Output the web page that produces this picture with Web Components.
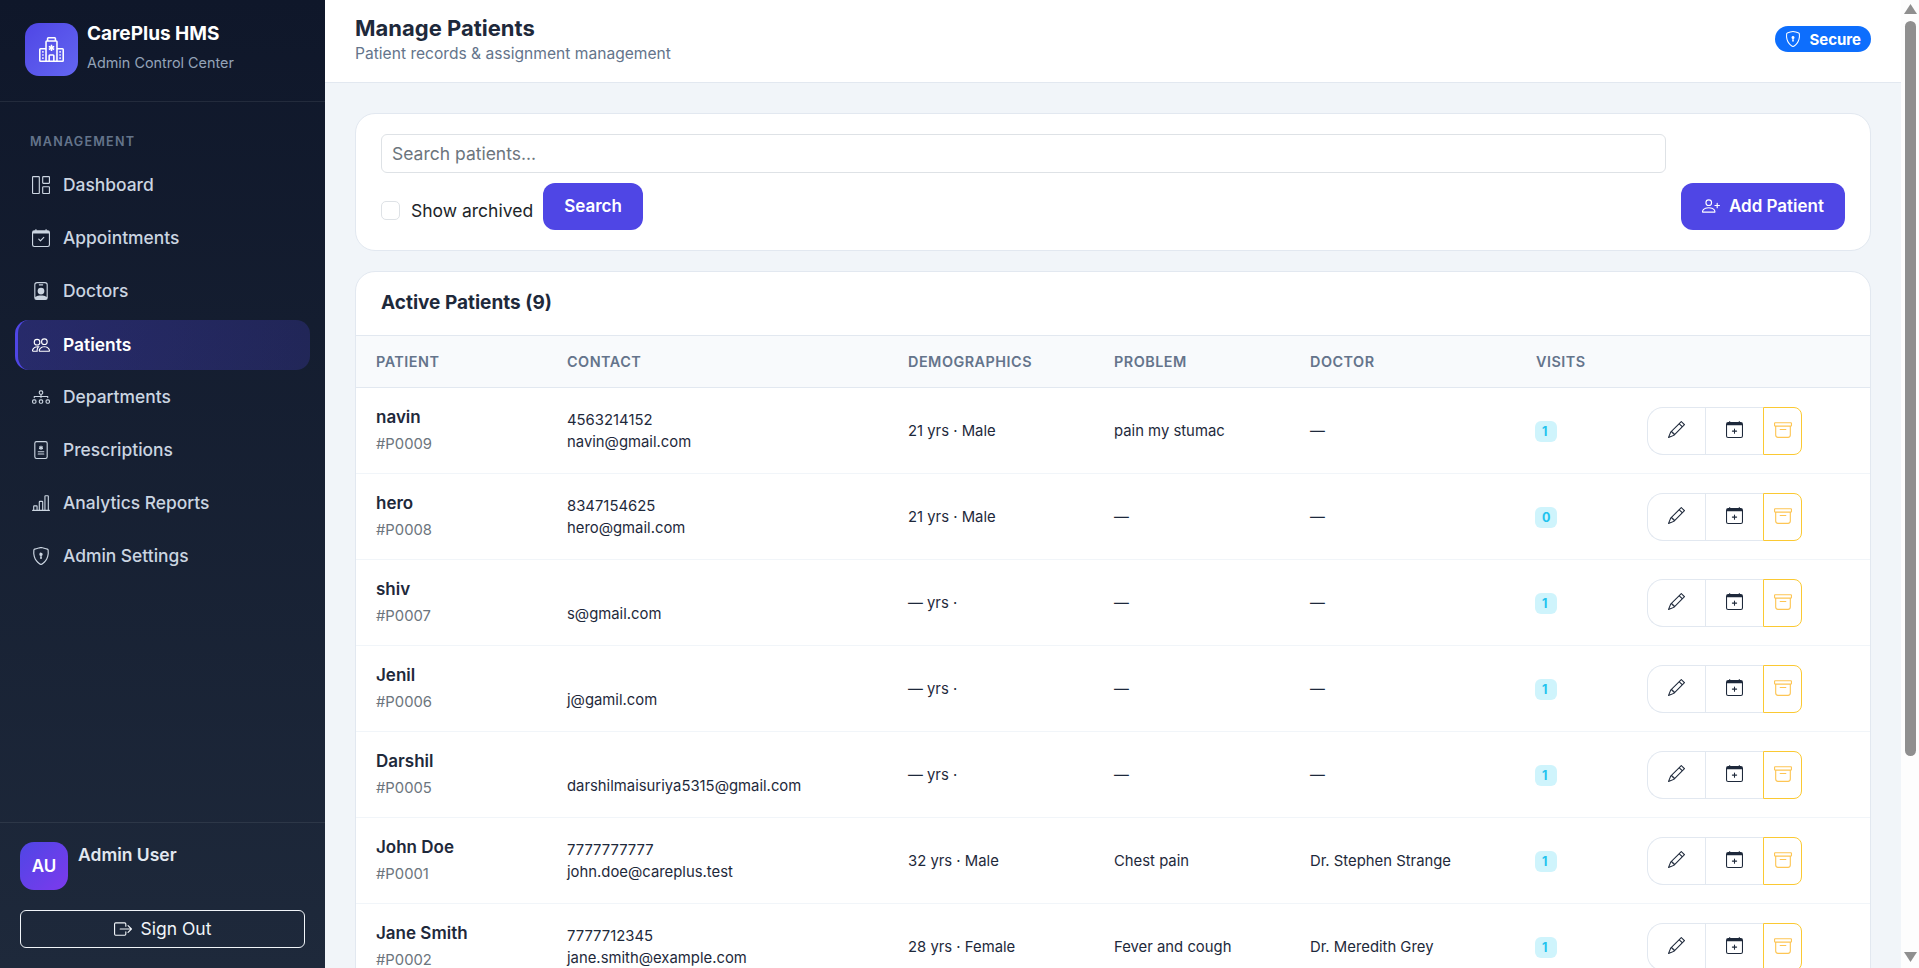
<!DOCTYPE html>
<html lang="en">
<head>
<meta charset="utf-8">
<title>Manage Patients</title>
<style>
  html { background: #f1f5f9; }
  body {
    margin: 0;
    font-family: Inter, "Noto Sans", sans-serif;
    color: #212529;
  }
</style>
</head>
<body>
<hms-app></hms-app>
<page-scrollbar></page-scrollbar>

<script>
const ICONS = {
  hospital: '<path d="M8.5 5.034v1.1l.953-.55.5.867L9 7l.953.55-.5.866-.953-.55v1.1h-1v-1.1l-.953.55-.5-.866L7 7l-.953-.55.5-.866.953.55v-1.1zM13.25 9a.25.25 0 0 0-.25.25v.5c0 .138.112.25.25.25h.5a.25.25 0 0 0 .25-.25v-.5a.25.25 0 0 0-.25-.25zM13 11.25a.25.25 0 0 1 .25-.25h.5a.25.25 0 0 1 .25.25v.5a.25.25 0 0 1-.25.25h-.5a.25.25 0 0 1-.25-.25zm.25 1.75a.25.25 0 0 0-.25.25v.5c0 .138.112.25.25.25h.5a.25.25 0 0 0 .25-.25v-.5a.25.25 0 0 0-.25-.25zm-11-4a.25.25 0 0 0-.25.25v.5c0 .138.112.25.25.25h.5A.25.25 0 0 0 3 9.75v-.5A.25.25 0 0 0 2.75 9zm0 2a.25.25 0 0 0-.25.25v.5c0 .138.112.25.25.25h.5a.25.25 0 0 0 .25-.25v-.5a.25.25 0 0 0-.25-.25zM2 13.25a.25.25 0 0 1 .25-.25h.5a.25.25 0 0 1 .25.25v.5a.25.25 0 0 1-.25.25h-.5a.25.25 0 0 1-.25-.25z"/><path d="M5 1a1 1 0 0 1 1-1h4a1 1 0 0 1 1 1v1a1 1 0 0 1 1 1v4h3a1 1 0 0 1 1 1v7a1 1 0 0 1-1 1H1a1 1 0 0 1-1-1V8a1 1 0 0 1 1-1h3V3a1 1 0 0 1 1-1zm2 14h2v-3H7zm3 0h1V3H5v12h1v-3a1 1 0 0 1 1-1h2a1 1 0 0 1 1 1zm0-14H6v1h4zm2 7v7h3V8zm-8 7V8H1v7z"/>',
  dashboard: '<path d="M6 1H1v14h5zm9 0h-5v5h5zm0 9v5h-5v-5zM0 1a1 1 0 0 1 1-1h5a1 1 0 0 1 1 1v14a1 1 0 0 1-1 1H1a1 1 0 0 1-1-1zm9 0a1 1 0 0 1 1-1h5a1 1 0 0 1 1 1v5a1 1 0 0 1-1 1h-5a1 1 0 0 1-1-1zm1 8a1 1 0 0 0-1 1v5a1 1 0 0 0 1 1h5a1 1 0 0 0 1-1v-5a1 1 0 0 0-1-1z"/>',
  appointments: '<path d="M10.854 7.146a.5.5 0 0 1 0 .708l-3 3a.5.5 0 0 1-.708 0l-1.5-1.5a.5.5 0 1 1 .708-.708L7.5 9.793l2.646-2.647a.5.5 0 0 1 .708 0"/><path d="M3.5 0a.5.5 0 0 1 .5.5V1h8V.5a.5.5 0 0 1 1 0V1h1a2 2 0 0 1 2 2v11a2 2 0 0 1-2 2H2a2 2 0 0 1-2-2V3a2 2 0 0 1 2-2h1V.5a.5.5 0 0 1 .5-.5M1 4v10a1 1 0 0 0 1 1h12a1 1 0 0 0 1-1V4z"/>',
  doctors: '<path d="M6.5 2a.5.5 0 0 0 0 1h3a.5.5 0 0 0 0-1zM11 8a3 3 0 1 1-6 0 3 3 0 0 1 6 0"/><path d="M4.5 0A2.5 2.5 0 0 0 2 2.5V14a2 2 0 0 0 2 2h8a2 2 0 0 0 2-2V2.5A2.5 2.5 0 0 0 11.5 0zM3 2.5A1.5 1.5 0 0 1 4.5 1h7A1.5 1.5 0 0 1 13 2.5v10.795a4.2 4.2 0 0 0-.776-.492C11.392 12.387 10.063 12 8 12s-3.392.387-4.224.803a4.2 4.2 0 0 0-.776.492z"/>',
  patients: '<path d="M15 14s1 0 1-1-1-4-5-4-5 3-5 4 1 1 1 1zm-7.978-1L7 12.996c.001-.264.167-1.03.76-1.72C8.312 10.629 9.282 10 11 10c1.717 0 2.687.63 3.24 1.276.593.69.758 1.457.76 1.72l-.008.002-.014.002zM11 7a2 2 0 1 0 0-4 2 2 0 0 0 0 4m3-2a3 3 0 1 1-6 0 3 3 0 0 1 6 0M6.936 9.28a6 6 0 0 0-1.23-.247A7 7 0 0 0 5 9c-4 0-5 3-5 4q0 1 1 1h4.216A2.24 2.24 0 0 1 5 13c0-1.01.377-2.042 1.09-2.904.243-.294.526-.569.846-.816M4.92 10A5.5 5.5 0 0 0 4 13H1c0-.26.164-1.03.76-1.724.545-.636 1.492-1.256 3.16-1.275ZM1.5 5.5a3 3 0 1 1 6 0 3 3 0 0 1-6 0m3-2a2 2 0 1 0 0 4 2 2 0 0 0 0-4"/>',
  departments: '<path d="M6 3.5A1.5 1.5 0 0 1 7.5 2h1A1.5 1.5 0 0 1 10 3.5v1A1.5 1.5 0 0 1 8.5 6v1H14a.5.5 0 0 1 .5.5v1a.5.5 0 0 1-1 0V8h-5v.5a.5.5 0 0 1-1 0V8h-5v.5a.5.5 0 0 1-1 0v-1A.5.5 0 0 1 2 7h5.5V6A1.5 1.5 0 0 1 6 4.5zM8.5 5a.5.5 0 0 0 .5-.5v-1a.5.5 0 0 0-.5-.5h-1a.5.5 0 0 0-.5.5v1a.5.5 0 0 0 .5.5zM0 11.5A1.5 1.5 0 0 1 1.5 10h1A1.5 1.5 0 0 1 4 11.5v1A1.5 1.5 0 0 1 2.5 14h-1A1.5 1.5 0 0 1 0 12.5zm1.5-.5a.5.5 0 0 0-.5.5v1a.5.5 0 0 0 .5.5h1a.5.5 0 0 0 .5-.5v-1a.5.5 0 0 0-.5-.5zm4.5.5A1.5 1.5 0 0 1 7.5 10h1a1.5 1.5 0 0 1 1.5 1.5v1A1.5 1.5 0 0 1 8.5 14h-1A1.5 1.5 0 0 1 6 12.5zm1.5-.5a.5.5 0 0 0-.5.5v1a.5.5 0 0 0 .5.5h1a.5.5 0 0 0 .5-.5v-1a.5.5 0 0 0-.5-.5zm4.5.5a1.5 1.5 0 0 1 1.5-1.5h1a1.5 1.5 0 0 1 1.5 1.5v1a1.5 1.5 0 0 1-1.5 1.5h-1a1.5 1.5 0 0 1-1.5-1.5zm1.5-.5a.5.5 0 0 0-.5.5v1a.5.5 0 0 0 .5.5h1a.5.5 0 0 0 .5-.5v-1a.5.5 0 0 0-.5-.5z"/>',
  prescriptions: '<path d="M8.5 4.5a.5.5 0 0 0-1 0v.634l-.549-.317a.5.5 0 1 0-.5.866L7 6l-.549.317a.5.5 0 1 0 .5.866l.549-.317V7.5a.5.5 0 1 0 1 0v-.634l.549.317a.5.5 0 1 0 .5-.866L9 6l.549-.317a.5.5 0 1 0-.5-.866l-.549.317zM5.5 9a.5.5 0 0 0 0 1h5a.5.5 0 0 0 0-1zm0 2a.5.5 0 0 0 0 1h5a.5.5 0 0 0 0-1z"/><path d="M2 2a2 2 0 0 1 2-2h8a2 2 0 0 1 2 2v12a2 2 0 0 1-2 2H4a2 2 0 0 1-2-2zm10-1H4a1 1 0 0 0-1 1v12a1 1 0 0 0 1 1h8a1 1 0 0 0 1-1V2a1 1 0 0 0-1-1"/>',
  analytics: '<path d="M11 2a1 1 0 0 1 1-1h2a1 1 0 0 1 1 1v12h.5a.5.5 0 0 1 0 1H.5a.5.5 0 0 1 0-1H1v-3a1 1 0 0 1 1-1h2a1 1 0 0 1 1 1v3h1V7a1 1 0 0 1 1-1h2a1 1 0 0 1 1 1v7h1zm1 12h2V2h-2zm-3 0V7H7v7zm-5 0v-3H2v3z"/>',
  shield: '<path d="M5.338 1.59a61 61 0 0 0-2.837.856.48.48 0 0 0-.328.39c-.554 4.157.726 7.19 2.253 9.188a10.7 10.7 0 0 0 2.287 2.233c.346.244.652.42.893.533q.18.085.293.118a1 1 0 0 0 .101.025 1 1 0 0 0 .1-.025q.114-.034.294-.118c.24-.113.547-.29.893-.533a10.7 10.7 0 0 0 2.287-2.233c1.527-1.997 2.807-5.031 2.253-9.188a.48.48 0 0 0-.328-.39c-.651-.213-1.75-.56-2.837-.855C9.552 1.29 8.531 1.067 8 1.067c-.53 0-1.552.223-2.662.524zM5.072.56C6.157.265 7.31 0 8 0s1.843.265 2.928.56c1.11.3 2.229.655 2.887.87a1.54 1.54 0 0 1 1.044 1.262c.596 4.477-.787 7.795-2.465 9.99a11.8 11.8 0 0 1-2.517 2.453 7 7 0 0 1-1.048.625c-.28.132-.581.24-.829.24s-.548-.108-.829-.24a7 7 0 0 1-1.048-.625 11.8 11.8 0 0 1-2.517-2.453C1.928 10.487.545 7.169 1.141 2.692A1.54 1.54 0 0 1 2.185 1.43 63 63 0 0 1 5.072.56"/><path d="M9.5 6.5a1.5 1.5 0 0 1-1 1.415l.385 1.99a.5.5 0 0 1-.491.595h-.788a.5.5 0 0 1-.49-.595l.384-1.99a1.5 1.5 0 1 1 2-1.415"/>',
  signout: '<path d="M10 12.5a.5.5 0 0 1-.5.5h-8a.5.5 0 0 1-.5-.5v-9a.5.5 0 0 1 .5-.5h8a.5.5 0 0 1 .5.5v2a.5.5 0 0 0 1 0v-2A1.5 1.5 0 0 0 9.5 2h-8A1.5 1.5 0 0 0 0 3.5v9A1.5 1.5 0 0 0 1.5 14h8a1.5 1.5 0 0 0 1.5-1.5v-2a.5.5 0 0 0-1 0z"/><path d="M15.854 8.354a.5.5 0 0 0 0-.708l-3-3a.5.5 0 0 0-.708.708L14.293 7.5H5.5a.5.5 0 0 0 0 1h8.793l-2.147 2.146a.5.5 0 0 0 .708.708z"/>',
  personplus: '<path d="M6 8a3 3 0 1 0 0-6 3 3 0 0 0 0 6m2-3a2 2 0 1 1-4 0 2 2 0 0 1 4 0m4 8c0 1-1 1-1 1H1s-1 0-1-1 1-4 6-4 6 3 6 4m-1-.004c-.001-.246-.154-.986-.832-1.664C9.516 10.68 8.289 10 6 10s-3.516.68-4.168 1.332c-.678.678-.83 1.418-.832 1.664z"/><path d="M13.5 5a.5.5 0 0 1 .5.5V7h1.5a.5.5 0 0 1 0 1H14v1.5a.5.5 0 0 1-1 0V8h-1.5a.5.5 0 0 1 0-1H13V5.5a.5.5 0 0 1 .5-.5"/>',
  pencil: '<path d="M12.146.146a.5.5 0 0 1 .708 0l3 3a.5.5 0 0 1 0 .708l-10 10a.5.5 0 0 1-.168.11l-5 2a.5.5 0 0 1-.65-.65l2-5a.5.5 0 0 1 .11-.168zM11.207 2.5 13.5 4.793 14.793 3.5 12.5 1.207zm1.586 3L10.5 3.207 4 9.707V10h.5a.5.5 0 0 1 .5.5v.5h.5a.5.5 0 0 1 .5.5v.5h.293zm-9.761 5.175-.106.106-1.528 3.821 3.821-1.528.106-.106A.5.5 0 0 1 5 12.5V12h-.5a.5.5 0 0 1-.5-.5V11h-.5a.5.5 0 0 1-.468-.325"/>',
  calplus: '<path d="M8 7a.5.5 0 0 1 .5.5V9H10a.5.5 0 0 1 0 1H8.5v1.5a.5.5 0 0 1-1 0V10H6a.5.5 0 0 1 0-1h1.5V7.5A.5.5 0 0 1 8 7"/><path d="M3.5 0a.5.5 0 0 1 .5.5V1h8V.5a.5.5 0 0 1 1 0V1h1a2 2 0 0 1 2 2v11a2 2 0 0 1-2 2H2a2 2 0 0 1-2-2V3a2 2 0 0 1 2-2h1V.5a.5.5 0 0 1 .5-.5M1 4v10a1 1 0 0 0 1 1h12a1 1 0 0 0 1-1V4z"/>',
  archive: '<path d="M0 2a1 1 0 0 1 1-1h14a1 1 0 0 1 1 1v2a1 1 0 0 1-1 1v7.5a2.5 2.5 0 0 1-2.5 2.5h-9A2.5 2.5 0 0 1 1 12.5V5a1 1 0 0 1-1-1zm2 3v7.5A1.5 1.5 0 0 0 3.5 14h9a1.5 1.5 0 0 0 1.5-1.5V5zm13-3H1v2h14zM5 7.5a.5.5 0 0 1 .5-.5h5a.5.5 0 0 1 0 1h-5a.5.5 0 0 1-.5-.5"/>',
};

class HmsIcon extends HTMLElement {
  connectedCallback() {
    const size = this.getAttribute("size") || 16;
    this.attachShadow({ mode: "open" }).innerHTML = `
      <style>
        :host { display: inline-flex; line-height: 0; flex: none; }
      </style>
      <svg xmlns="http://www.w3.org/2000/svg" width="${size}" height="${size}" viewBox="0 0 16 16" fill="currentColor">${ICONS[this.getAttribute("name")] || ""}</svg>`;
  }
}
customElements.define("hms-icon", HmsIcon);

class NavItem extends HTMLElement {
  constructor() {
    super();
    this.attachShadow({ mode: "open" }).innerHTML = `
      <style>
        :host {
          display: flex;
          align-items: center;
          gap: 13px;
          height: 50px;
          margin-bottom: 3px;
          padding: 0 0 3px 14px;
          box-sizing: border-box;
          border-left: 3px solid transparent;
          border-radius: 14px;
          color: #cbd5e1;
          font-size: 17.4px;
          font-weight: 500;
        }
        :host([active]) {
          padding-bottom: 1px;
          color: #fff;
          font-weight: 600;
          border-left-color: #4f46e5;
          background: linear-gradient(90deg, rgba(79,70,229,.32), rgba(79,70,229,.22));
        }
      </style>
      <slot name="icon"></slot><slot></slot>`;
  }
}
customElements.define("nav-item", NavItem);

class HmsSidebar extends HTMLElement {
  constructor() {
    super();
    const items = [
      ["dashboard", "Dashboard"],
      ["appointments", "Appointments"],
      ["doctors", "Doctors"],
      ["patients", "Patients"],
      ["departments", "Departments"],
      ["prescriptions", "Prescriptions"],
      ["analytics", "Analytics Reports"],
      ["shield", "Admin Settings"],
    ];
    this.attachShadow({ mode: "open" }).innerHTML = `
      <style>
        :host {
          display: flex;
          flex-direction: column;
          position: sticky;
          top: 0;
          height: 100vh;
          width: 325px;
          flex: none;
          box-sizing: border-box;
          background: linear-gradient(180deg, #0f172a, #1e293b);
        }
        .brand {
          display: flex;
          gap: 9px;
          height: 102px;
          box-sizing: border-box;
          padding: 23px 25px 0;
          border-bottom: 1px solid rgba(255,255,255,.08);
        }
        .logo {
          width: 53px;
          height: 53px;
          border-radius: 14px;
          background: linear-gradient(135deg, #4f46e5, #6366f1);
          color: #fff;
          display: flex;
          align-items: center;
          justify-content: center;
        }
        .brand b { display: block; color: #fff; font-size: 19px; font-weight: 700; line-height: 24px; margin-top: -1px; }
        .brand span { display: block; color: #94a3b8; font-size: 14.4px; line-height: 20px; margin-top: 7px; }
        nav { flex: 1; padding: 30px 15px 0; }
        .label {
          color: #64748b;
          font-size: 12.6px;
          font-weight: 600;
          letter-spacing: 1.2px;
          line-height: 20px;
          padding-left: 15px;
          margin-bottom: 9px;
        }
        .foot {
          padding: 19px 20px 20px;
          border-top: 1px solid rgba(255,255,255,.08);
        }
        .user { display: flex; gap: 10px; margin-bottom: 20px; }
        .avatar {
          width: 48px;
          height: 48px;
          border-radius: 14px;
          background: linear-gradient(135deg, #4f46e5, #7c3aed);
          color: #fff;
          font-weight: 600;
          font-size: 17px;
          display: flex;
          align-items: center;
          justify-content: center;
        }
        .name { color: #e2e8f0; font-size: 17.5px; font-weight: 600; line-height: 24px; margin-top: 1px; }
        .signout {
          display: flex;
          align-items: center;
          justify-content: center;
          gap: 9px;
          height: 38px;
          padding-bottom: 1px;
          box-sizing: border-box;
          border: 1px solid #f1f5f9;
          border-radius: 6px;
          color: #f1f5f9;
          font-size: 17.5px;
        }
      </style>
      <div class="brand">
        <div class="logo"><hms-icon name="hospital" size="25"></hms-icon></div>
        <div><b>CarePlus HMS</b><span>Admin Control Center</span></div>
      </div>
      <nav>
        <div class="label">MANAGEMENT</div>
        ${items.map(([icon, text]) => `<nav-item ${text === "Patients" ? "active" : ""}><hms-icon slot="icon" name="${icon}" size="18"></hms-icon>${text}</nav-item>`).join("")}
      </nav>
      <div class="foot">
        <div class="user"><div class="avatar">AU</div><div class="name">Admin User</div></div>
        <div class="signout"><hms-icon name="signout" size="18"></hms-icon>Sign Out</div>
      </div>`;
  }
}
customElements.define("hms-sidebar", HmsSidebar);

class HmsTopbar extends HTMLElement {
  constructor() {
    super();
    this.attachShadow({ mode: "open" }).innerHTML = `
      <style>
        :host {
          display: flex;
          justify-content: space-between;
          align-items: center;
          height: 83px;
          box-sizing: border-box;
          padding: 0 30px;
          background: #fff;
          border-bottom: 1px solid #e2e8f0;
        }
        .titles { padding-bottom: 5px; }
        h1 { margin: 0; font-size: 22px; font-weight: 700; line-height: 28px; color: #1e293b; }
        p { margin: 2px 0 0; font-size: 15.6px; line-height: 20px; color: #64748b; }
        .secure {
          display: flex;
          align-items: center;
          gap: 8px;
          height: 26px;
          padding: 0 10px;
          border-radius: 13px;
          background: #0d6efd;
          color: #fff;
          font-size: 15px;
          font-weight: 700;
          margin-bottom: 4px;
        }
      </style>
      <div class="titles"><h1>Manage Patients</h1><p>Patient records &amp; assignment management</p></div>
      <div class="secure"><hms-icon name="shield" size="16"></hms-icon>Secure</div>`;
  }
}
customElements.define("hms-topbar", HmsTopbar);

class HmsButton extends HTMLElement {
  constructor() {
    super();
    this.attachShadow({ mode: "open" }).innerHTML = `
      <style>
        :host {
          display: inline-flex;
          align-items: center;
          justify-content: center;
          gap: 9px;
          height: 47px;
          box-sizing: border-box;
          padding: 0 21px 2px;
          border-radius: 12px;
          background: #4f46e5;
          color: #fff;
          font-size: 17px;
          font-weight: 600;
        }
      </style>
      <slot></slot>`;
  }
}
customElements.define("hms-button", HmsButton);

class SearchCard extends HTMLElement {
  constructor() {
    super();
    this.attachShadow({ mode: "open" }).innerHTML = `
      <style>
        :host {
          display: grid;
          grid-template-columns: 1fr auto;
          column-gap: 15px;
          align-items: end;
          background: #fff;
          border: 1px solid #e2e8f0;
          border-radius: 20px;
          padding: 20px 25px;
        }
        input {
          display: block;
          width: 100%;
          box-sizing: border-box;
          height: 39px;
          padding: 0 10px 1px;
          border: 1px solid #dee2e6;
          border-radius: 6px;
          font: 17.5px Inter, sans-serif;
          background: #fff;
          outline: none;
        }
        input::placeholder { color: #6c757d; opacity: 1; }
        .row { display: flex; align-items: center; margin-top: 10px; }
        .check {
          width: 19px;
          height: 19px;
          box-sizing: border-box;
          border: 1px solid #dee2e6;
          border-radius: 5px;
          margin-top: 8px;
          background: #fff;
        }
        label { margin: 8px 10px 0 11px; font-size: 17.5px; color: #212529; }
      </style>
      <div>
        <input type="text" placeholder="Search patients...">
        <div class="row">
          <div class="check"></div><label>Show archived</label>
          <hms-button>Search</hms-button>
        </div>
      </div>
      <hms-button><hms-icon name="personplus" size="18"></hms-icon>Add Patient</hms-button>`;
  }
}
customElements.define("search-card", SearchCard);

class PatientRow extends HTMLElement {
  connectedCallback() {
    const a = (k) => this.getAttribute(k) || "";
    this.attachShadow({ mode: "open" }).innerHTML = `
      <style>
        :host {
          display: grid;
          grid-template-columns: var(--cols);
          align-items: center;
          height: 86px;
          box-sizing: border-box;
          padding: 0 var(--pad);
          border-bottom: 1px solid #f1f5f9;
          font-size: 14.85px;
          color: #1e293b;
        }
        :host(:last-child) { border-bottom: 0; }
        .who { padding-bottom: 2px; }
        .name { color: #1e293b; font-size: 17px; font-weight: 600; line-height: 24px; margin-bottom: 5px; }
        .id { color: #6c757d; font-size: 14.8px; line-height: 20px; }
        .line { line-height: 22px; min-height: 22px; }
        .visits {
          display: inline-block;
          margin: 2px 0 0 -1px;
          padding: 0 7px;
          min-width: 8px;
          line-height: 21px;
          border-radius: 6px;
          background: #cff4fc;
          color: #22c3ee;
          font-size: 12.5px;
          font-weight: 700;
        }
        .actions { display: flex; height: 48px; }
        .actions div {
          display: flex;
          align-items: center;
          justify-content: center;
          box-sizing: border-box;
          width: 58px;
          padding-bottom: 2px;
          border: 1px solid #e2e8f0;
          color: #1e293b;
        }
        .actions div:first-child { border-radius: 16px 0 0 16px; border-right: 0; }
        .actions div:nth-child(2) { border-right: 0; }
        .actions div:last-child {
          width: 39px;
          border-color: #fbc933;
          border-radius: 0 8px 8px 0;
          color: #fdc554;
        }
      </style>
      <div class="who"><div class="name">${a("name")}</div><div class="id">${a("pid")}</div></div>
      <div><div class="line">${a("phone")}</div><div class="line">${a("email")}</div></div>
      <div>${a("demo")}</div>
      <div>${a("problem")}</div>
      <div>${a("doctor")}</div>
      <div><span class="visits">${a("visits")}</span></div>
      <div class="actions">
        <div><hms-icon name="pencil" size="17"></hms-icon></div>
        <div><hms-icon name="calplus" size="17"></hms-icon></div>
        <div><hms-icon name="archive" size="18"></hms-icon></div>
      </div>`;
  }
}
customElements.define("patient-row", PatientRow);

class PatientTable extends HTMLElement {
  constructor() {
    super();
    this.attachShadow({ mode: "open" }).innerHTML = `
      <style>
        :host {
          display: block;
          --pad: 20px;
          --cols: 191px 341px 206px 196px 226px 111px 1fr;
          background: #fff;
          border: 1px solid #e2e8f0;
          border-radius: 20px;
          overflow: hidden;
        }
        h2 {
          margin: 0;
          height: 64px;
          box-sizing: border-box;
          padding: 0 25px 3px;
          display: flex;
          align-items: center;
          font-size: 19px;
          font-weight: 700;
          color: #1e293b;
          border-bottom: 1px solid #e2e8f0;
        }
        .head {
          display: grid;
          grid-template-columns: var(--cols);
          align-items: center;
          height: 52px;
          box-sizing: border-box;
          padding: 0 var(--pad) 1px;
          background: #f8fafc;
          border-bottom: 1px solid #e2e8f0;
          font-size: 14.4px;
          font-weight: 600;
          letter-spacing: .5px;
          color: #64748b;
        }
      </style>
      <h2>Active Patients (9)</h2>
      <div class="head">
        <div>PATIENT</div><div>CONTACT</div><div>DEMOGRAPHICS</div><div>PROBLEM</div><div>DOCTOR</div><div>VISITS</div><div></div>
      </div>
      <slot></slot>`;
  }
}
customElements.define("patient-table", PatientTable);

class HmsApp extends HTMLElement {
  constructor() {
    super();
    const rows = [
      ["navin", "#P0009", "4563214152", "navin@gmail.com", "21 yrs · Male", "pain my stumac", "—", "1"],
      ["hero", "#P0008", "8347154625", "hero@gmail.com", "21 yrs · Male", "—", "—", "0"],
      ["shiv", "#P0007", "", "s@gmail.com", "— yrs ·", "—", "—", "1"],
      ["Jenil", "#P0006", "", "j@gamil.com", "— yrs ·", "—", "—", "1"],
      ["Darshil", "#P0005", "", "darshilmaisuriya5315@gmail.com", "— yrs ·", "—", "—", "1"],
      ["John Doe", "#P0001", "7777777777", "john.doe@careplus.test", "32 yrs · Male", "Chest pain", "Dr. Stephen Strange", "1"],
      ["Jane Smith", "#P0002", "7777712345", "jane.smith@example.com", "28 yrs · Female", "Fever and cough", "Dr. Meredith Grey", "1"],
      ["Alex Ray", "#P0003", "7777754321", "alex.ray@example.com", "41 yrs · Male", "Back pain", "Dr. Stephen Strange", "1"],
      ["Mia Wong", "#P0004", "7777767890", "mia.wong@example.com", "35 yrs · Female", "Migraine", "Dr. Meredith Grey", "1"],
    ];
    this.attachShadow({ mode: "open" }).innerHTML = `
      <style>
        :host { display: flex; align-items: flex-start; background: #f1f5f9; padding-right: 18px; }
        main { flex: 1; min-width: 0; }
        .content { padding: 30px; display: flex; flex-direction: column; gap: 20px; }
      </style>
      <hms-sidebar></hms-sidebar>
      <main>
        <hms-topbar></hms-topbar>
        <div class="content">
          <search-card></search-card>
          <patient-table>
            ${rows.map((r) => `<patient-row name="${r[0]}" pid="${r[1]}" phone="${r[2]}" email="${r[3]}" demo="${r[4]}" problem="${r[5]}" doctor="${r[6]}" visits="${r[7]}"></patient-row>`).join("")}
          </patient-table>
        </div>
      </main>`;
  }
}
customElements.define("hms-app", HmsApp);

// the browser's own scrollbar is not drawn in the photograph, so draw it over the page edge
class PageScrollbar extends HTMLElement {
  constructor() {
    super();
    this.attachShadow({ mode: "open" }).innerHTML = `
      <style>
        :host {
          position: fixed;
          top: 0;
          right: 0;
          bottom: 0;
          width: 18px;
          display: flex;
          flex-direction: column;
          align-items: center;
          background: #fdfdfd;
        }
        svg { display: block; flex: none; fill: #8f8f8f; }
        .up { margin-top: 4px; }
        .thumb { width: 11px; height: 735px; margin-top: 7px; border-radius: 6px; background: #8f8f8f; }
        .gap { flex: 1; }
        .down { margin-bottom: 6px; }
      </style>
      <svg class="up" width="13" height="10" viewBox="0 0 13 10"><path d="M6.5 0L13 10H0z"/></svg>
      <div class="thumb"></div>
      <div class="gap"></div>
      <svg class="down" width="13" height="10" viewBox="0 0 13 10"><path d="M6.5 10L0 0h13z"/></svg>`;
  }
}
customElements.define("page-scrollbar", PageScrollbar);
</script>
</body>
</html>
